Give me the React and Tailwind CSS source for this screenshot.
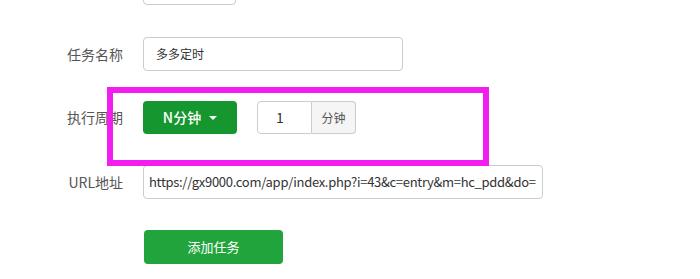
import React from "react";

const font = { fontFamily: '"Noto Sans CJK SC", "Noto Sans", sans-serif' };

const Label = ({ children }) => (
  <div className="w-[123px] shrink-0 text-right text-[14px] text-[#555]">
    {children}
  </div>
);

const App = () => {
  return (
    <div
      className="relative h-[279px] w-[700px] overflow-hidden bg-white"
      style={font}
    >
      <div className="flex flex-col">
        <div className="mt-[-29px] flex items-center">
          <div className="w-[143px]" />
          <div className="h-[34px] w-[93px] rounded border border-[#ccc]" />
        </div>

        <div className="mt-[32px] flex items-center">
          <Label>任务名称</Label>
          <div className="ml-[20px] flex h-[34px] w-[260px] items-center rounded border border-[#ccc] px-3 text-[12px] text-[#333]">
            多多定时
          </div>
        </div>

        <div className="mt-[30px] flex items-center">
          <Label>执行周期</Label>
          <button className="ml-[20px] flex h-[33px] w-[94px] items-center justify-center gap-1 rounded bg-[#15962e] text-[14px] font-medium text-white">
            N分钟
            <span className="ml-1 inline-block h-0 w-0 border-x-[4px] border-t-[4px] border-x-transparent border-t-white" />
          </button>
          <div className="ml-[20px] flex h-[33px]">
            <div className="flex w-[55px] items-center rounded-l border border-[#ccc] pl-[18px] text-[14px] text-[#333]">
              1
            </div>
            <div className="flex w-[44px] items-center justify-center rounded-r border border-l-0 border-[#ccc] bg-[#f5f5f5] text-[12px] text-[#555]">
              分钟
            </div>
          </div>
        </div>

        <div className="mt-[31px] flex items-center">
          <Label>URL地址</Label>
          <div className="ml-[20px] flex h-[34px] w-[400px] items-center overflow-hidden whitespace-nowrap rounded border border-[#ccc] pl-[5px] text-[13px] tracking-[-0.3px] text-[#333]">
            https://gx9000.com/app/index.php?i=43&amp;c=entry&amp;m=hc_pdd&amp;do=
          </div>
        </div>

        <div className="mt-[31px] flex items-center">
          <div className="w-[144px]" />
          <button className="flex h-[34px] w-[139px] items-center justify-center rounded bg-[#21a43b] text-[13px] text-white">
            添加任务
          </button>
        </div>
      </div>

      <div className="pointer-events-none absolute left-[107px] top-[87px] h-[79px] w-[382px] border-[6px] border-[#f21ef0]" />
    </div>
  );
};

export default App;
